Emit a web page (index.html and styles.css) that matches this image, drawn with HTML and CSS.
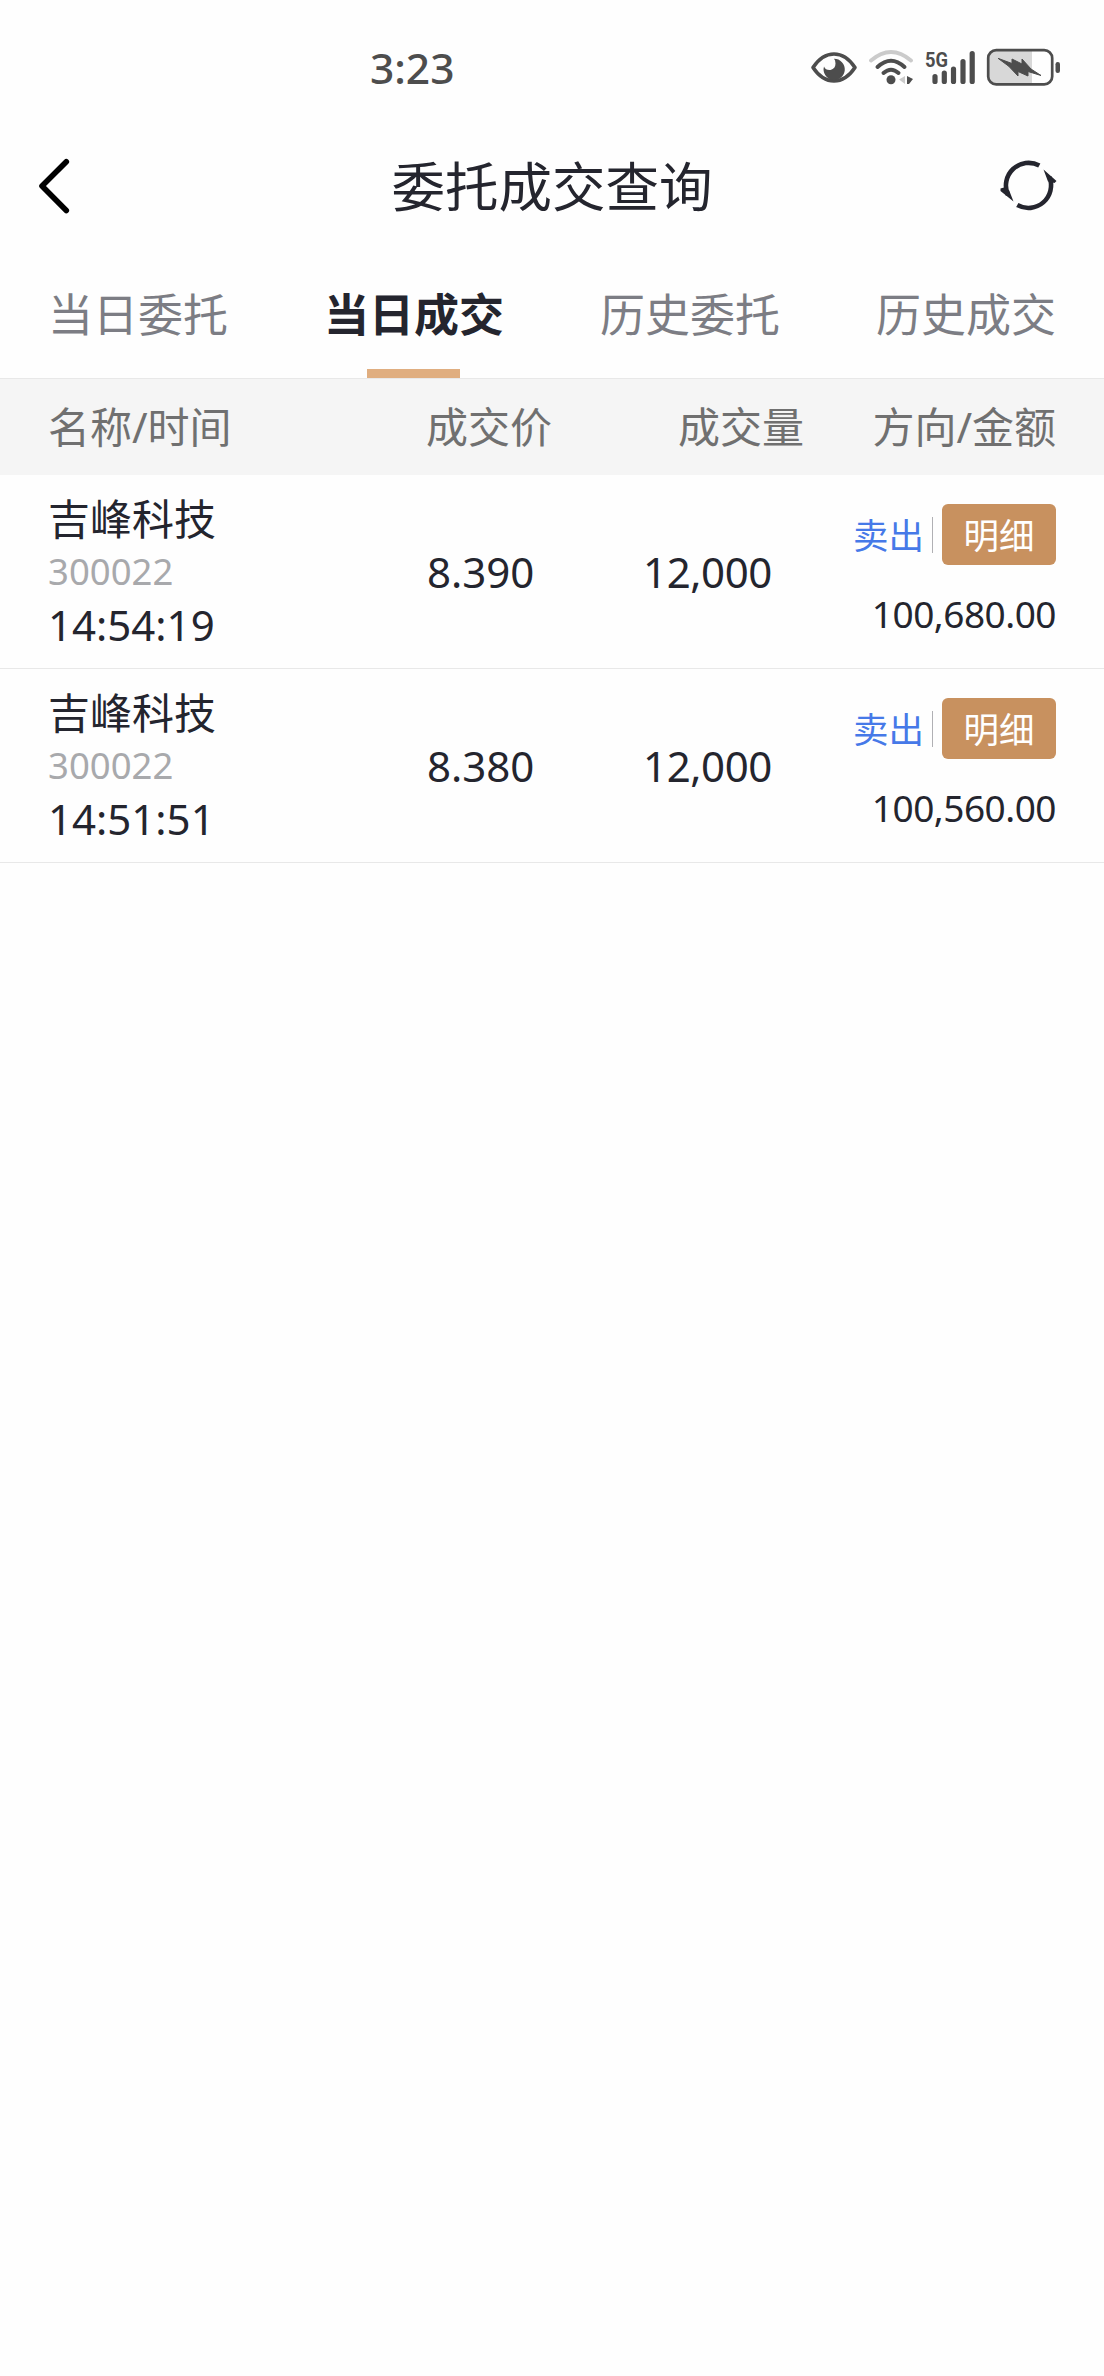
FILE: index.html
```html
<!DOCTYPE html>
<html lang="zh-CN">
<head>
<meta charset="utf-8">
<title>委托成交查询</title>
<link rel="stylesheet" href="styles.css">
</head>
<body>
<div class="status">
  <span class="clock">3:23</span>
  <svg class="status-icons" width="254" height="44" viewBox="808 46 254 44" fill="none" stroke-linecap="round">
    <path d="M813 67.5Q822 54 834 54T855 67.5Q846 81 834 81T813 67.5Z" stroke="#4d4d4d" stroke-width="3.6" stroke-linejoin="round"/>
    <path d="M834 58.8A10.6 10.6 0 1 1 824 66.5Q825.500 70.500 830.500 70Q835.500 68.500 835.500 63.500Q835.400 60 834 58.800Z" fill="#4d4d4d"/>
    <path d="M871 60.500Q891 43.500 911 60.500" stroke="#cbcbcb" stroke-width="3.800"/>
    <path d="M877.500 67Q891 54.500 904.500 67" stroke="#4d4d4d" stroke-width="4"/>
    <path d="M883.500 73Q891 66.500 898.500 73" stroke="#4d4d4d" stroke-width="4"/>
    <circle cx="891" cy="79.800" r="4.500" fill="#4d4d4d"/>
    <path d="M905 76v8l-6-4.500z" fill="#cbcbcb"/>
    <path d="M907 76l6 3-4 5h-2z" fill="#4d4d4d"/>
    <text class="network" x="925" y="67" textLength="23" lengthAdjust="spacingAndGlyphs">5G</text>
    <path d="M935 76.500V81.500M944.300 73V81.500M953.500 69V81.500M963 61.500V81.500M972.200 53.500V81.500" stroke="#4d4d4d" stroke-width="5.200"/>
    <path d="M1032 51H996Q989 51 989 58V76Q989 83 996 83H1032Z" fill="#d8d8d8"/>
    <rect x="988.200" y="50.200" width="64" height="34.200" rx="8" stroke="#4d4d4d" stroke-width="2.700"/>
    <rect x="1055.500" y="62" width="4.500" height="11" rx="2.200" fill="#4d4d4d"/>
    <path d="M998.500 58.500L1012 63.500 1012 59 1022 64 1022 59 1031 69 1041 75.500 1028 71.500 1028 76 1018 71.500 1018 76 1009 66.500Z" fill="#4d4d4d" stroke="#4d4d4d" stroke-width="1" stroke-linejoin="round"/>
  </svg>
</div>

<header class="titlebar">
  <svg width="34" height="60" viewBox="37 156 34 60" fill="none"><path d="M66.300 161.800L42 186L66.300 210.500" stroke="#000" stroke-width="5.600" stroke-linecap="round" stroke-linejoin="round"/></svg>
  <h1>委托成交查询</h1>
  <svg width="60" height="60" viewBox="998 156 60 60" fill="none" stroke="#24252e" stroke-width="4.600">
    <path d="M1039.300 165.500A22.700 22.700 0 0 0 1008 195"/>
    <path d="M1017.300 205.100A22.700 22.700 0 0 0 1049.500 177"/>
    <path d="M1000.500 188.500L1004 187.500L1009 190L1013.500 201.500L1000.500 191ZM1043.500 169.500L1056.500 181L1054.500 183L1048 181.500Z" fill="#24252e" stroke="none"/>
  </svg>
</header>

<nav class="tabs">
  <a>当日委托</a>
  <a class="active">当日成交</a>
  <a>历史委托</a>
  <a>历史成交</a>
</nav>

<div class="columns">
  <span>名称/时间</span><span>成交价</span><span>成交量</span><span class="end">方向/金额</span>
</div>

<main>
  <section class="trade">
    <div class="stock"><div>吉峰科技</div><div class="code">300022</div><div class="time">14:54:19</div></div>
    <div class="price">8.390</div>
    <div class="volume">12,000</div>
    <div class="deal">
      <div class="actions"><span class="side">卖出</span><i></i><button>明细</button></div>
      <div class="amount">100,680.00</div>
    </div>
  </section>
  <section class="trade">
    <div class="stock"><div>吉峰科技</div><div class="code">300022</div><div class="time">14:51:51</div></div>
    <div class="price">8.380</div>
    <div class="volume">12,000</div>
    <div class="deal">
      <div class="actions"><span class="side">卖出</span><i></i><button>明细</button></div>
      <div class="amount">100,560.00</div>
    </div>
  </section>
</main>
</body>
</html>
```
FILE: styles.css
```css
* { box-sizing: border-box; }
body {
  margin: 0;
  min-height: 2376px;
  background: #fefefe;
  color: #24252e;
  font-family: "Noto Sans", "Noto Sans CJK SC", sans-serif;
  font-size: 42px;
}
.status {
  height: 136px;
  padding: 0 42px 0 370px;
  display: flex;
  align-items: center;
  justify-content: space-between;
}
.clock { color: #4d4d4d; font-size: 42.5px; font-weight: 500; line-height: 60px; }
.network { font: 700 21px Roboto, sans-serif; fill: #4d4d4d; }
.titlebar {
  height: 100px;
  padding: 0 46px 0 37px;
  display: grid;
  grid-template-columns: 69px 1fr 60px;
  align-items: center;
}
h1 { margin: 2px 0 0; font-size: 53.5px; font-weight: 400; line-height: 80px; text-align: center; }
.tabs {
  height: 143px;
  padding: 0 48px;
  display: flex;
  justify-content: space-between;
  border-bottom: 1px solid #e8e8e8;
  color: #7c7d84;
  font-size: 45px;
  line-height: 158px;
}
.tabs a { height: 142px; display: flex; flex-direction: column; align-items: center; }
.tabs .active { color: #24252e; font-weight: 700; }
.tabs .active::after {
  content: "";
  width: 93px;
  height: 9px;
  margin-top: -25px;
  background: #e0ae80;
}
.columns, .trade {
  padding: 0 48px;
  display: grid;
  align-items: center;
}
.columns {
  height: 96px;
  grid-template-columns: 378px 252px 150px 1fr;
  background: #f5f5f5;
  color: #707070;
  line-height: 60px;
}
.end { text-align: right; }
.trade {
  height: 194px;
  grid-template-columns: 378px 170px 176px 1fr;
  border-bottom: 1px solid #e8e8e8;
  line-height: 53px;
}
.code { color: #a8a9ac; font-size: 36.5px; }
.price { padding-left: 1px; }
.volume { text-align: right; letter-spacing: -0.4px; }
.deal { display: flex; flex-direction: column; align-items: flex-end; gap: 22px; padding-top: 1px; }
.actions { display: flex; align-items: center; font-size: 35.5px; }
.side { color: #4679e8; padding-top: 1px; }
.actions i { width: 1px; height: 36px; margin: 0 9px 0 8px; background: #b0b0b4; }
button {
  width: 114px;
  height: 61px;
  padding: 1px 0 0;
  border: 0;
  border-radius: 6px;
  background: #c8915f;
  color: #fff;
  font: inherit;
  line-height: 60px;
}
.amount { font-size: 37px; letter-spacing: -0.5px; }
```
